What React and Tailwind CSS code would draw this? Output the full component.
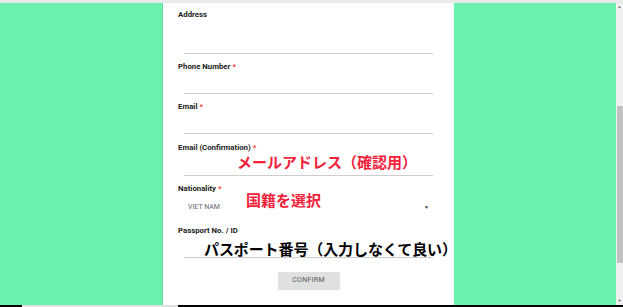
export default function App() {
  const label = "text-[7.8px] font-bold text-[#222] leading-[10px] h-[10px] whitespace-nowrap";
  const Star = () => <span className="text-[#f44336] ml-[2px]">*</span>;
  return (
    <div className="w-[623px] h-[307px] overflow-hidden bg-[#6cf2ae] flex flex-col relative" style={{ fontFamily: "Roboto, 'Noto Sans', sans-serif" }}>
      <div className="h-[3px] bg-[#e9e9e9] shrink-0" />
      <div className="flex flex-1 min-h-0">
        <div className="w-[163px] shrink-0 border-r border-[#5fdc9c]" />
        <div className="w-[290px] shrink-0 bg-white pl-[15px] pr-[14px] flex flex-col relative">
          <div className="mt-[7px]">
            <div className={label}>Address</div>
            <div className="mx-[6px] h-[34px] border-b border-[#cdcdcd]" />
          </div>
          <div className="mt-[8px]">
            <div className={label}>Phone Number<Star /></div>
            <div className="mx-[6px] h-[22px] border-b border-[#cdcdcd]" />
          </div>
          <div className="mt-[8px]">
            <div className={label}>Email<Star /></div>
            <div className="mx-[6px] h-[22px] border-b border-[#cdcdcd]" />
          </div>
          <div className="mt-[9px]">
            <div className={label}>Email (Confirmation)<Star /></div>
            <div className="mx-[6px] h-[23px] border-b border-[#cdcdcd]" />
          </div>
          <div className="mt-[8px]">
            <div className={label}>Nationality<Star /></div>
            <div className="mx-[6px] h-[32px] flex items-start justify-between pt-[8px] pl-[4px] pr-[4px]">
              <span className="text-[7px] text-[#666] leading-[10px]">VIET NAM</span>
              <span className="text-[5px] text-[#333] leading-[10px]">▼</span>
            </div>
          </div>
          <div>
            <div className={label}>Passport No. / ID</div>
            <div className="mx-[6px] h-[22px] border-b border-[#cdcdcd]" />
          </div>
          <div className="flex justify-center mt-[14px]">
            <div className="w-[62px] h-[17px] bg-[#e0e0e0] rounded-[2px] shadow-[0_1px_1px_rgba(0,0,0,0.15)] flex items-center justify-center text-[7px] text-[#555] tracking-[0.3px]">CONFIRM</div>
          </div>

          <div className="absolute left-[74px] top-[149px] text-[15px] font-bold text-[#f2223b] whitespace-nowrap leading-[20px]" style={{ fontFamily: "'Noto Sans CJK JP', sans-serif" }}>メールアドレス（確認用）</div>
          <div className="absolute left-[83px] top-[187px] text-[15px] font-bold text-[#f2223b] whitespace-nowrap leading-[20px]" style={{ fontFamily: "'Noto Sans CJK JP', sans-serif" }}>国籍を選択</div>
          <div className="absolute left-[41px] top-[236px] text-[15px] font-bold text-black whitespace-nowrap leading-[20px] tracking-[-0.1px]" style={{ fontFamily: "'Noto Sans CJK JP', sans-serif" }}>パスポート番号（入力しなくて良い）</div>
        </div>
        <div className="flex-1 border-l border-[#e8fff2]" />
        <div className="w-[7px] shrink-0 bg-[#f0f0f0] flex flex-col items-center">
          <div className="h-[6px] flex items-end justify-center"><span className="text-[4px] leading-[4px] text-[#606060]">▲</span></div>
          <div className="mt-[97px] h-[157px] w-[6px] bg-[#c1c1c1]" />
          <div className="mt-auto h-[6px] flex items-start justify-center"><span className="text-[4px] leading-[4px] text-[#606060]">▼</span></div>
        </div>
      </div>
      <div className="h-[2px] shrink-0 flex">
        <div className="w-[22px] bg-black" />
        <div className="w-[156px] bg-[#e2e2e2]" />
        <div className="flex-1 bg-black" />
      </div>
    </div>
  );
}
